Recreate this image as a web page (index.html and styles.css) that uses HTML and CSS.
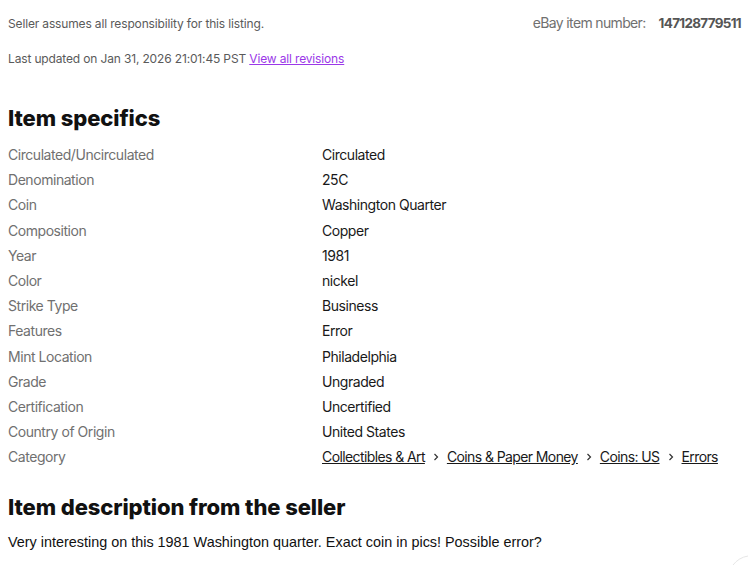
FILE: index.html
```html
<!DOCTYPE html>
<html>
<head>
<meta charset="utf-8">
<link rel="stylesheet" href="styles.css">
</head>
<body>
<div class="page">
  <div class="topbar">
    <span class="resp">Seller assumes all responsibility for this listing.</span>
    <span class="itemno">eBay item number:<b>147128779511</b></span>
  </div>
  <div class="updated">Last updated on Jan 31, 2026 21:01:45 PST <a href="#" class="revisions">View all revisions</a></div>

  <h2 class="section-title specifics-title">Item specifics</h2>
  <dl class="specs">
    <dt>Circulated/Uncirculated</dt><dd>Circulated</dd>
    <dt>Denomination</dt><dd>25C</dd>
    <dt>Coin</dt><dd>Washington Quarter</dd>
    <dt>Composition</dt><dd>Copper</dd>
    <dt>Year</dt><dd>1981</dd>
    <dt>Color</dt><dd>nickel</dd>
    <dt>Strike Type</dt><dd>Business</dd>
    <dt>Features</dt><dd>Error</dd>
    <dt>Mint Location</dt><dd>Philadelphia</dd>
    <dt>Grade</dt><dd>Ungraded</dd>
    <dt>Certification</dt><dd>Uncertified</dd>
    <dt>Country of Origin</dt><dd>United States</dd>
    <dt>Category</dt>
    <dd class="crumbs">
      <a href="#">Collectibles &amp; Art</a>
      <svg class="sep" viewBox="0 0 8 8" width="8" height="8"><path d="M2.5 1 L5.5 4 L2.5 7" fill="none" stroke="#333" stroke-width="1.2"/></svg>
      <a href="#">Coins &amp; Paper Money</a>
      <svg class="sep" viewBox="0 0 8 8" width="8" height="8"><path d="M2.5 1 L5.5 4 L2.5 7" fill="none" stroke="#333" stroke-width="1.2"/></svg>
      <a href="#">Coins: US</a>
      <svg class="sep" viewBox="0 0 8 8" width="8" height="8"><path d="M2.5 1 L5.5 4 L2.5 7" fill="none" stroke="#333" stroke-width="1.2"/></svg>
      <a href="#">Errors</a>
    </dd>
  </dl>

  <h2 class="section-title desc-title">Item description from the seller</h2>
  <p class="desc">Very interesting on this 1981 Washington quarter. Exact coin in pics! Possible error?</p>
</div>
<svg class="fab" viewBox="0 0 20 12" width="20" height="12"><path d="M5 12 A24 24 0 0 1 20 3" fill="none" stroke="#e6e6e6" stroke-width="1"/></svg>
</body>
</html>
```
FILE: styles.css
```css
html, body {
  margin: 0;
  padding: 0;
  background: #fff;
}
body {
  font-family: Inter, "Liberation Sans", Arial, sans-serif;
  color: #191919;
  overflow: hidden;
  height: 565px;
  position: relative;
}
.page {
  padding: 0 7px 0 8px;
}
.topbar {
  display: flex;
  justify-content: space-between;
  align-items: baseline;
  padding-top: 14px;
  height: 20px;
}
.resp {
  font-size: 12px;
  letter-spacing: -0.15px;
  color: #5a5a5a;
}
.itemno {
  font-size: 14px;
  letter-spacing: -0.65px;
  color: #707070;
}
.itemno b {
  font-weight: 700;
  font-size: 13.5px;
  letter-spacing: -0.7px;
  color: #555;
  margin-left: 13px;
}
.updated {
  margin-top: 17px;
  font-size: 12px;
  letter-spacing: -0.15px;
  color: #5a5a5a;
  line-height: 16px;
}
.revisions {
  color: #9b38e8;
}
.section-title {
  margin: 0;
  font-size: 22px;
  font-weight: 800;
  color: #111;
  letter-spacing: -0.1px;
}
.specifics-title {
  margin-top: 37px;
  line-height: 28px;
}
.specs {
  margin: 10px 0 0;
  display: grid;
  grid-template-columns: 314px 1fr;
  grid-auto-rows: 25.2px;
  font-size: 14px;
  letter-spacing: -0.45px;
  line-height: 25.2px;
}
.specs dt {
  color: #707070;
}
.specs dd {
  margin: 0;
  color: #191919;
}
.crumbs {
  display: flex;
  align-items: center;
  white-space: nowrap;
}
.crumbs a {
  color: #191919;
  letter-spacing: -0.6px;
}
.crumbs .sep {
  flex: none;
  margin: 0 7px 0 7px;
}
.desc-title {
  margin-top: 24px;
  line-height: 28px;
}
.desc {
  margin: 13px 0 0;
  font-family: "Liberation Sans", Arial, sans-serif;
  font-size: 14.4px;
  line-height: 17px;
  color: #111;
}
.fab {
  position: absolute;
  right: 0;
  bottom: 0;
}
```
